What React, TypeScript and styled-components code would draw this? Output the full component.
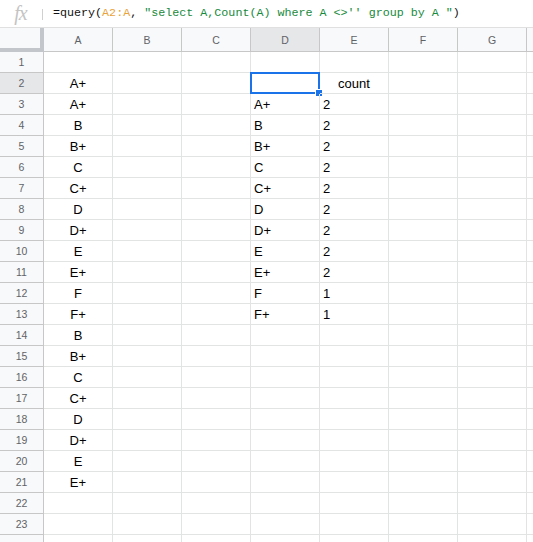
import React from "react";
import styled, { createGlobalStyle, css } from "styled-components";

const Global = createGlobalStyle`
  html, body { margin: 0; padding: 0; background: #fff; overflow: hidden; }
  body { font-family: "Liberation Sans", Arial, sans-serif; }
`;

const Page = styled.div`
  width: 533px;
  height: 542px;
  overflow: hidden;
  display: flex;
  flex-direction: column;
  background: #fff;
`;

const FormulaBar = styled.div`
  height: 28px;
  box-sizing: border-box;
  border-bottom: 1px solid #e0e0e0;
  display: flex;
  align-items: center;
  flex-shrink: 0;
`;

const FxBox = styled.div`
  width: 43px;
  display: flex;
  align-items: center;
  justify-content: center;
  position: relative;
  height: 100%;
  &::after {
    content: "";
    position: absolute;
    right: 0;
    top: 9px;
    height: 11px;
    width: 1px;
    background: #d0d0d0;
  }
`;

const FxText = styled.span`
  font-family: "Liberation Serif", "Times New Roman", serif;
  font-style: italic;
  font-size: 20px;
  color: #c4c4c4;
  letter-spacing: -1px;
  margin-left: -2px;
  margin-top: -1px;
`;

const Formula = styled.div`
  padding-left: 10px;
  font-family: "Liberation Mono", "Courier New", monospace;
  font-size: 11.7px;
  color: #111;
  white-space: pre;
  margin-top: -1px;
`;

const Ref = styled.span`
  color: #e9a33b;
`;

const Str = styled.span`
  color: #178a3c;
`;

const Grid = styled.div`
  display: grid;
  grid-template-columns: 44px repeat(7, 69px) 69px;
  grid-auto-rows: 21px;
  grid-template-rows: 24px;
`;

const HeaderCell = styled.div<{ $active?: boolean; $corner?: boolean }>`
  box-sizing: border-box;
  background: ${(p) => (p.$active ? "#e6e7e9" : "#f8f9fa")};
  border-right: 1px solid #c7c7c7;
  border-bottom: 1px solid #c7c7c7;
  display: flex;
  align-items: center;
  justify-content: center;
  font-family: "Liberation Sans", Arial, sans-serif;
  font-size: 10.5px;
  color: #5f6368;
  ${(p) =>
    p.$corner &&
    css`
      border-right: 4px solid #c3c6ca;
      border-bottom: 4px solid #c3c6ca;
    `}
`;

const RowHead = styled.div<{ $active?: boolean }>`
  box-sizing: border-box;
  background: ${(p) => (p.$active ? "#e6e7e9" : "#f8f9fa")};
  border-right: 1px solid #c7c7c7;
  border-bottom: 1px solid #c7c7c7;
  display: flex;
  align-items: center;
  justify-content: center;
  font-size: 10.5px;
  color: #5f6368;
`;

const Cell = styled.div<{ $align?: "left" | "center" }>`
  box-sizing: border-box;
  position: relative;
  border-right: 1px solid #e2e3e3;
  border-bottom: 1px solid #e2e3e3;
  display: flex;
  align-items: center;
  justify-content: ${(p) => (p.$align === "center" ? "center" : "flex-start")};
  padding: 0 3px;
  font-size: 13px;
  color: #000;
  white-space: nowrap;
  overflow: visible;
`;

const Selection = styled.div`
  position: absolute;
  left: -1px;
  top: -1px;
  right: -1px;
  bottom: -1px;
  border: 2px solid #1a73e8;
  pointer-events: none;
`;

const Handle = styled.div`
  position: absolute;
  right: -5px;
  bottom: -5px;
  width: 6px;
  height: 6px;
  background: #1a73e8;
  border: 1px solid #fff;
`;

const colLetters = ["A", "B", "C", "D", "E", "F", "G", ""];

const colA = [
  "", "A+", "A+", "B", "B+", "C", "C+", "D", "D+", "E", "E+", "F", "F+",
  "B", "B+", "C", "C+", "D", "D+", "E", "E+", "", "", "",
];
const colD = [
  "", "", "A+", "B", "B+", "C", "C+", "D", "D+", "E", "E+", "F", "F+",
];
const colE = [
  "", "count", "2", "2", "2", "2", "2", "2", "2", "2", "2", "1", "1",
];

export default function App() {
  const rows = Array.from({ length: 24 }, (_, i) => i + 1);
  return (
    <Page>
      <Global />
      <FormulaBar>
        <FxBox>
          <FxText>fx</FxText>
        </FxBox>
        <Formula>
          =query(<Ref>A2:A</Ref>, <Str>"select A,Count(A) where A &lt;&gt;'' group by A "</Str>)
        </Formula>
      </FormulaBar>
      <Grid>
        <HeaderCell $corner />
        {colLetters.map((l, i) => (
          <HeaderCell key={i} $active={l === "D"}>
            {l}
          </HeaderCell>
        ))}
        {rows.map((r) => (
          <React.Fragment key={r}>
            <RowHead $active={r === 2}>{r <= 23 ? r : ""}</RowHead>
            <Cell $align="center">{colA[r - 1] || ""}</Cell>
            <Cell />
            <Cell />
            <Cell>
              {colD[r - 1] || ""}
              {r === 2 && (
                <Selection>
                  <Handle />
                </Selection>
              )}
            </Cell>
            <Cell $align={r === 2 ? "center" : "left"}>{colE[r - 1] || ""}</Cell>
            <Cell />
            <Cell />
            <Cell />
          </React.Fragment>
        ))}
      </Grid>
    </Page>
  );
}
